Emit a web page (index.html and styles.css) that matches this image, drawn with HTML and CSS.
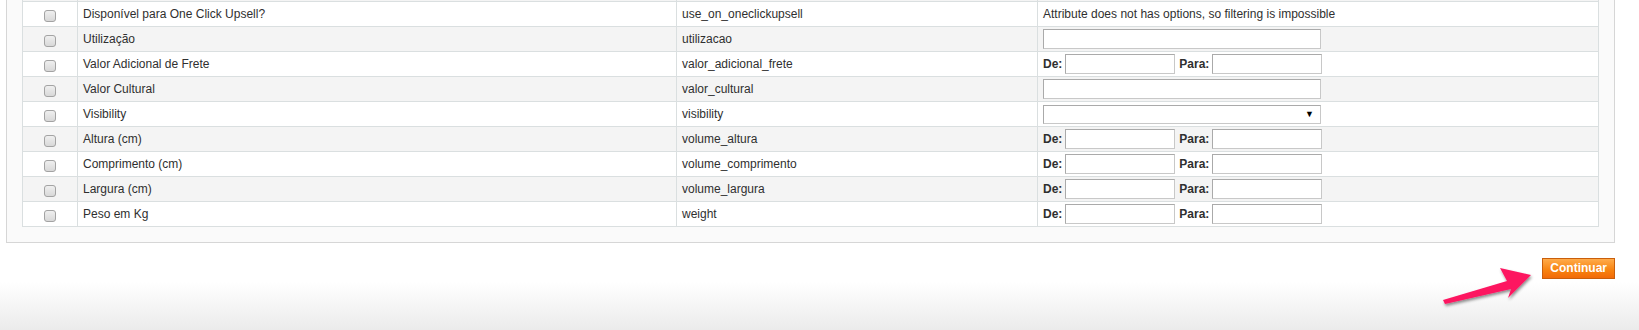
FILE: index.html
```html
<!DOCTYPE html>
<html lang="pt">
  <head>
    <meta charset="UTF-8" />
    <meta name="viewport" content="width=device-width, initial-scale=1.0" />
    <title>Filtros de atributos</title>
    <link rel="stylesheet" href="styles.css">
  </head>
  <body>
    <div class="fieldset">
      <table class="grid">
        <colgroup>
          <col class="c-check" />
          <col class="c-label" />
          <col class="c-code" />
          <col class="c-filter" />
        </colgroup>
        <tbody>
          <!-- previous row, scrolled mostly out of view -->
          <tr class="even">
            <td class="check"></td>
            <td></td>
            <td></td>
            <td><input type="text" class="input-text wide" /></td>
          </tr>
          <tr>
            <td class="check"><input type="checkbox" /></td>
            <td>Disponível para One Click Upsell?</td>
            <td>use_on_oneclickupsell</td>
            <td>Attribute does not has options, so filtering is impossible</td>
          </tr>
          <tr class="even">
            <td class="check"><input type="checkbox" /></td>
            <td>Utilização</td>
            <td>utilizacao</td>
            <td><input type="text" class="input-text wide" /></td>
          </tr>
          <tr>
            <td class="check"><input type="checkbox" /></td>
            <td>Valor Adicional de Frete</td>
            <td>valor_adicional_frete</td>
            <td>
              <div class="range">
                <span class="label">De:</span><input type="text" class="input-text small" />
                <span class="label">Para:</span><input type="text" class="input-text small" />
              </div>
            </td>
          </tr>
          <tr class="even">
            <td class="check"><input type="checkbox" /></td>
            <td>Valor Cultural</td>
            <td>valor_cultural</td>
            <td><input type="text" class="input-text wide" /></td>
          </tr>
          <tr>
            <td class="check"><input type="checkbox" /></td>
            <td>Visibility</td>
            <td>visibility</td>
            <td>
              <span class="select-wrap"><select class="select"><option></option></select></span>
            </td>
          </tr>
          <tr class="even">
            <td class="check"><input type="checkbox" /></td>
            <td>Altura (cm)</td>
            <td>volume_altura</td>
            <td>
              <div class="range">
                <span class="label">De:</span><input type="text" class="input-text small" />
                <span class="label">Para:</span><input type="text" class="input-text small" />
              </div>
            </td>
          </tr>
          <tr>
            <td class="check"><input type="checkbox" /></td>
            <td>Comprimento (cm)</td>
            <td>volume_comprimento</td>
            <td>
              <div class="range">
                <span class="label">De:</span><input type="text" class="input-text small" />
                <span class="label">Para:</span><input type="text" class="input-text small" />
              </div>
            </td>
          </tr>
          <tr class="even">
            <td class="check"><input type="checkbox" /></td>
            <td>Largura (cm)</td>
            <td>volume_largura</td>
            <td>
              <div class="range">
                <span class="label">De:</span><input type="text" class="input-text small" />
                <span class="label">Para:</span><input type="text" class="input-text small" />
              </div>
            </td>
          </tr>
          <tr>
            <td class="check"><input type="checkbox" /></td>
            <td>Peso em Kg</td>
            <td>weight</td>
            <td>
              <div class="range">
                <span class="label">De:</span><input type="text" class="input-text small" />
                <span class="label">Para:</span><input type="text" class="input-text small" />
              </div>
            </td>
          </tr>
        </tbody>
      </table>
    </div>

    <div class="buttons">
      <button type="button" class="btn-continue">Continuar</button>
    </div>

    <!-- annotation arrow drawn over the page -->
    <svg class="pointer" width="110" height="56" viewBox="1430 258 110 56">
      <defs>
        <filter id="shadow" x="-20%" y="-40%" width="140%" height="180%">
          <feDropShadow dx="1" dy="2" stdDeviation="1.6" flood-color="#000" flood-opacity="0.45" />
        </filter>
      </defs>
      <polygon filter="url(#shadow)" fill="#fd1561"
        points="1443,300 1507,281 1500,268 1531,275 1508,298 1511,289 1445,304" />
    </svg>
  </body>
</html>
```

FILE: styles.css
```css
html,
body {
  margin: 0;
  padding: 0;
}
body {
  min-height: 100vh;
  background: linear-gradient(to bottom, #fff 0, #fff 282px, #ebebeb 330px);
  font-family: "Liberation Sans", Arial, sans-serif;
  font-size: 12px;
  color: #2f2f2f;
  position: relative;
  overflow: hidden;
}
.fieldset {
  width: 1577px;
  margin: -40px 0 0 6px;
  padding: 15px;
  background: #fafafa;
  border: 1px solid #d6d6d6;
}
.grid {
  width: 1577px;
  table-layout: fixed;
  border-collapse: collapse;
  background: #fff;
}
.c-check {
  width: 55px;
}
.c-label {
  width: 599px;
}
.c-code {
  width: 361px;
}
.grid tr {
  height: 25px;
}
.grid td {
  height: 24px;
  padding: 0 5px;
  border: 1px solid #dadfe0;
  vertical-align: middle;
  white-space: nowrap;
}
.grid tr.even td {
  background: #f4f4f4;
}
.grid td.check {
  text-align: center;
  padding: 0;
}
input[type="checkbox"] {
  appearance: none;
  width: 12px;
  height: 12px;
  margin: 3px 0 0 0;
  border: 1px solid #a3a3a3;
  border-radius: 3px;
  background: linear-gradient(#efefef, #d8d8d8);
  vertical-align: top;
}
.input-text {
  box-sizing: border-box;
  height: 20px;
  margin: 0;
  padding: 1px 2px;
  border: 1px solid;
  border-color: #aaa #c8c8c8 #c8c8c8 #aaa;
  background: #fff;
  font: 12px "Liberation Sans", Arial, sans-serif;
  vertical-align: middle;
}
.wide {
  width: 278px;
}
.small {
  width: 110px;
}
.range {
  display: flex;
  align-items: center;
}
.range .label {
  font-weight: bold;
  margin-right: 3px;
}
.range .small {
  margin-right: 4px;
}
.select-wrap {
  position: relative;
  display: inline-block;
  vertical-align: middle;
}
.select-wrap::after {
  content: "▼";
  position: absolute;
  right: 7px;
  top: 4px;
  font-size: 9px;
  color: #000;
  pointer-events: none;
}
.select {
  appearance: none;
  box-sizing: border-box;
  width: 278px;
  height: 19px;
  margin: 0;
  border: 1px solid;
  border-color: #aaa #c8c8c8 #c8c8c8 #aaa;
  background: #fff;
  font: 12px "Liberation Sans", Arial, sans-serif;
}
.buttons {
  width: 1609px;
  margin: 15px 0 0 6px;
  text-align: right;
}
.btn-continue {
  height: 21px;
  padding: 0 7px 1px;
  border: 1px solid #c95e0b;
  background: linear-gradient(#ffab4a, #f7820f 60%, #f26a08);
  color: #fff;
  font: bold 12px "Liberation Sans", Arial, sans-serif;
  cursor: pointer;
}
.btn-continue:hover {
  background: #f18200;
}
.pointer {
  position: absolute;
  left: 1430px;
  top: 258px;
}
```
